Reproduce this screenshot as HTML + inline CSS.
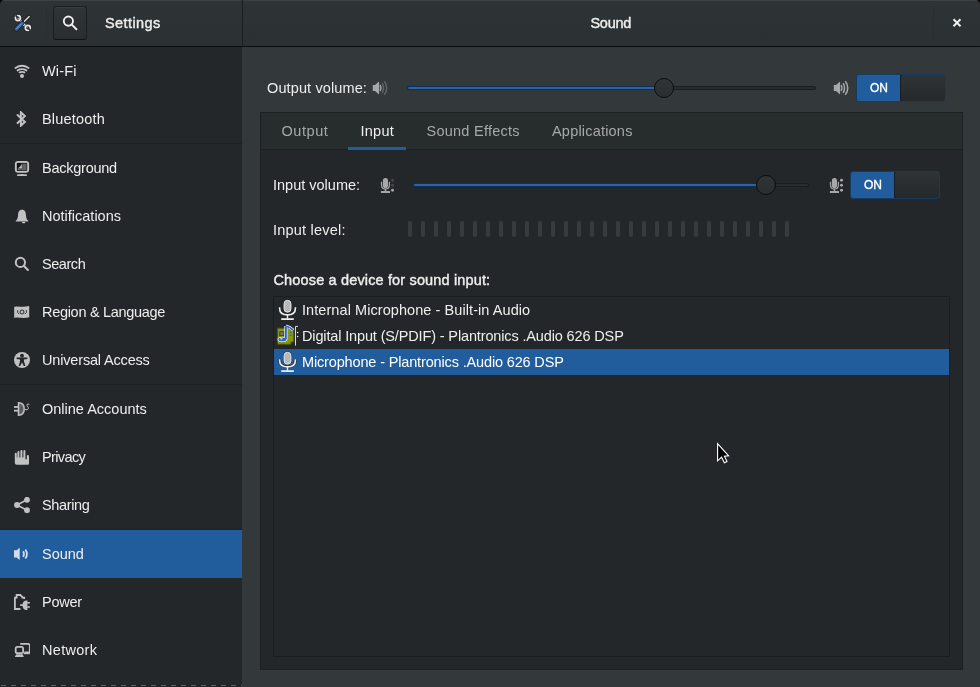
<!DOCTYPE html>
<html><head><meta charset="utf-8">
<style>
*{margin:0;padding:0;box-sizing:border-box}
html,body{width:980px;height:687px;overflow:hidden;background:#000}
body{-webkit-font-smoothing:antialiased;font-family:"Liberation Sans",sans-serif;font-size:14.5px;color:#eeeeec;position:relative}
.a{position:absolute}
.t{position:absolute;line-height:20px;white-space:nowrap}
.b{font-weight:normal;font-size:14.5px;-webkit-text-stroke:0.4px currentColor}
#win{will-change:transform;position:absolute;left:0;top:0;width:980px;height:687px;border-radius:5px 5px 0 0;overflow:hidden;background:#33393b}
#hdr{position:absolute;left:0;top:0;width:980px;height:47px;background:linear-gradient(#2e3335,#2b3032);border-bottom:1px solid #0c0d0e;box-shadow:inset 0 1px #3d4244}
#side{position:absolute;left:0;top:47px;width:242px;height:640px;background:#232729}
.row{position:absolute;left:0;width:242px;height:48px}
.sep{position:absolute;left:0;width:242px;height:1px;background:#1e2123}
.ic{position:absolute;left:14px;width:16px;height:16px}
.lab{position:absolute;left:42px;top:14px;line-height:20px;white-space:nowrap}
</style></head><body>
<div id="win">
 <div id="hdr">
  <div class="a" style="left:242px;top:0;width:1px;height:46px;background:#1b1e1f"></div>
  <div class="a" style="left:46px;top:6px;width:1px;height:34px;background:#2a2e30"></div>
  <div class="a" style="left:933px;top:6px;width:1px;height:34px;background:#2a2e30"></div>
  <!-- search button -->
  <div class="a" style="left:53px;top:6px;width:34px;height:34px;border:1px solid #1b1e1f;border-bottom-color:#111314;border-radius:3px;background:linear-gradient(#2f3436,#2a2e30);box-shadow:inset 0 1px rgba(255,255,255,0.05)"></div>
  <svg class="a" style="left:61px;top:14px" width="18" height="18" viewBox="0 0 18 18"><circle cx="7.4" cy="7.1" r="4.6" fill="none" stroke="#eeeeec" stroke-width="1.9"/><path d="M10.6 10.4 L15.4 15.2" stroke="#eeeeec" stroke-width="2" stroke-linecap="round"/></svg>
  <!-- app icon -->
  <svg class="a" style="left:10px;top:10px" width="26" height="26" viewBox="0 0 26 26">
   <path d="M19.2 6.6 L13 12.8" stroke="#16191a" stroke-width="2.8" stroke-linecap="round"/>
   <path d="M19.2 6.6 L13 12.8" stroke="#e4e4e4" stroke-width="1.4" stroke-linecap="round"/>
   <path d="M7.6 8.2 L17.4 18" stroke="#16191a" stroke-width="3.8"/>
   <path d="M7.6 8.2 L17.4 18" stroke="#e2e2e2" stroke-width="2.5"/>
   <circle cx="7.9" cy="8.1" r="2.5" fill="none" stroke="#16191a" stroke-width="2.8"/>
   <circle cx="7.9" cy="8.1" r="2.5" fill="none" stroke="#e6e6e6" stroke-width="1.8"/>
   <path d="M5.6 5.4 L8.4 8.2" stroke="#2c3133" stroke-width="1.7"/>
   <circle cx="17.8" cy="17.8" r="2.5" fill="none" stroke="#16191a" stroke-width="2.8"/>
   <circle cx="17.8" cy="17.8" r="2.5" fill="none" stroke="#e6e6e6" stroke-width="1.8"/>
   <path d="M17.4 17.6 L20.4 20.4" stroke="#2c3133" stroke-width="1.7"/>
   <path d="M6.4 19 L12.2 13.2" stroke="#16191a" stroke-width="4.6" stroke-linecap="round"/>
   <path d="M6.4 19 L12.2 13.2" stroke="#3767a8" stroke-width="3.4" stroke-linecap="round"/>
   <path d="M6.4 18.8 L11.4 13.8" stroke="#8aaedb" stroke-width="0.7"/>
  </svg>
  <div class="t b" style="left:105px;top:13px;letter-spacing:0.4px">Settings</div>
  <div class="t b" style="left:590.5px;top:13px;letter-spacing:-0.3px">Sound</div>
  <svg class="a" style="left:951px;top:17px" width="12" height="12" viewBox="0 0 12 12"><path d="M2.5 2.3 L9.5 9.3 M9.5 2.3 L2.5 9.3" stroke="#eeeeec" stroke-width="2"/></svg>
 </div>

 <div id="side"></div>
 <div class="row" style="top:47px;"><svg class="ic" style="top:16px" viewBox="0 0 16 16"><circle cx="8" cy="13.1" r="2" fill="#c0c1c1"/>
<path d="M1.5 5 Q8 0.5 14.5 5" fill="none" stroke="#c0c1c1" stroke-width="1.9" stroke-linecap="round"/>
<path d="M3.6 7.4 Q8 4.9 12.4 7.4" fill="none" stroke="#c0c1c1" stroke-width="1.9" stroke-linecap="round"/>
<path d="M5.6 9.4 Q8 8.4 10.4 9.4" fill="none" stroke="#c0c1c1" stroke-width="1.8" stroke-linecap="round"/></svg><div class="lab" style="letter-spacing:0.15px">Wi-Fi</div></div><div class="row" style="top:95px;"><svg class="ic" style="top:16px" viewBox="0 0 16 16"><path d="M3.6 4 L10.9 10.9 L6.9 14.6 V1.4 L10.9 5.1 L3.6 12" fill="none" stroke="#c0c1c1" stroke-width="2" stroke-linejoin="miter" stroke-linecap="round"/></svg><div class="lab" style="letter-spacing:0.18px">Bluetooth</div></div><div class="row" style="top:144px;"><svg class="ic" style="top:16px" viewBox="0 0 16 16"><rect x="1.9" y="1.9" width="12.2" height="9.9" rx="2.2" fill="none" stroke="#c0c1c1" stroke-width="2"/>
<rect x="2.9" y="2.9" width="10.2" height="7.9" fill="#141718"/>
<rect x="8.2" y="3.6" width="4.3" height="6.6" fill="#5f6364"/><rect x="3.6" y="8.9" width="8.9" height="1.3" fill="#5f6364"/>
<path d="M7.9 3.6 V8.6 H3.6 C5.4 7.6 7.2 5.8 7.9 3.6Z" fill="#c0c1c1"/>
<path d="M3 14.4 Q8 13.4 13 14.4 V15.2 Q13 16.1 12 16.1 H4 Q3 16.1 3 15.2Z" fill="#c0c1c1"/></svg><div class="lab" style="letter-spacing:-0.25px">Background</div></div><div class="row" style="top:192px;"><svg class="ic" style="top:16px" viewBox="0 0 16 16"><path d="M8 1.8 C11.2 1.8 11.8 4.2 12 7.6 C12.2 10.6 13 12 14.3 13.1 V13.4 H1.7 V13.1 C3 12 3.8 10.6 4 7.6 C4.2 4.2 4.8 1.8 8 1.8Z" fill="#c0c1c1"/><ellipse cx="9.6" cy="14.5" rx="1.7" ry="0.85" fill="#c0c1c1"/></svg><div class="lab" style="letter-spacing:0px">Notifications</div></div><div class="row" style="top:240px;"><svg class="ic" style="top:16px" viewBox="0 0 16 16"><circle cx="6.4" cy="6.4" r="4.6" fill="none" stroke="#c0c1c1" stroke-width="2"/><path d="M9.8 9.8 L13.9 13.9" stroke="#c0c1c1" stroke-width="2.1" stroke-linecap="round"/></svg><div class="lab" style="letter-spacing:-0.45px">Search</div></div><div class="row" style="top:288px;"><svg class="ic" style="top:16px" viewBox="0 0 16 16"><path d="M0.2 3 C4 1.5 8 3.8 15.2 2 V13.2 C9 15 4 12.6 0.2 14 Z" fill="#c0c1c1"/>
<circle cx="8" cy="8" r="2" fill="none" stroke="#232729" stroke-width="1"/><path d="M3.6 6.2 V8.4 L5.2 10 M12.4 6.2 V8.4 L10.8 10" fill="none" stroke="#232729" stroke-width="0.9"/></svg><div class="lab" style="letter-spacing:-0.3px">Region &amp; Language</div></div><div class="row" style="top:336px;"><svg class="ic" style="top:16px" viewBox="0 0 16 16"><circle cx="8" cy="8" r="8" fill="#c0c1c1"/><circle cx="8" cy="3.7" r="1.9" fill="#232729"/>
<path d="M2.6 5.4 H13.4 V7 L10 7.4 V9.4 L11.4 14 H9.8 L8 10.6 L6.2 14 H4.6 L6 9.4 V7.4 L2.6 7Z" fill="#232729"/></svg><div class="lab" style="letter-spacing:-0.17px">Universal Access</div></div><div class="row" style="top:385px;"><svg class="ic" style="top:16px" viewBox="0 0 16 16"><rect x="-0.2" y="5.1" width="4.4" height="1.8" fill="#c0c1c1"/><rect x="-0.2" y="8.8" width="4.4" height="1.8" fill="#c0c1c1"/>
<path d="M4.5 1.7 C8.6 1.7 10.2 4.8 10.2 8 C10.2 11.2 8.6 14.2 4.5 14.2 Z" fill="#5a5e60" stroke="#c0c1c1" stroke-width="1.5"/>
<path d="M15.4 3.6 C14.8 2.8 12.9 2.8 12.9 4.1 C12.9 5.4 14.5 5.8 14.3 7.3 C14.1 8.8 12.4 9.2 11 8.4" fill="none" stroke="#c0c1c1" stroke-width="1"/></svg><div class="lab" style="letter-spacing:0px">Online Accounts</div></div><div class="row" style="top:433px;"><svg class="ic" style="top:16px" viewBox="0 0 16 16"><path d="M0.8 13.8 V4.8 A1 1 0 0 1 2.8 4.8 V8.6 H3.4 V3 A1 1 0 0 1 5.4 3 V8.6 H6.4 V2 A1 1 0 0 1 8.4 2 V8.6 H9.4 V2 A1 1 0 0 1 11.4 2 V10.2 H12.8 V7 A1.1 1.1 0 0 1 15 7 V14.2 C15 15.2 14.4 15.8 13.4 15.8 H2.8 C1.6 15.8 0.8 15 0.8 13.8Z" fill="#c0c1c1"/></svg><div class="lab" style="letter-spacing:-0.62px">Privacy</div></div><div class="row" style="top:481px;"><svg class="ic" style="top:16px" viewBox="0 0 16 16"><path d="M3 8 L13 2.8 M3 8 L13 13.2" stroke="#c0c1c1" stroke-width="1.6"/>
<circle cx="3" cy="8" r="2.9" fill="#c0c1c1"/><circle cx="13" cy="2.8" r="2.9" fill="#c0c1c1"/><circle cx="13" cy="13.2" r="2.9" fill="#c0c1c1"/></svg><div class="lab" style="letter-spacing:-0.36px">Sharing</div></div><div class="row" style="top:530px;background:#215d9c;"><svg class="ic" style="top:16px" viewBox="0 0 16 16"><path d="M0 4.2 H2.6 L5.7 1.8 V14 L2.6 11.6 H0 Z" fill="#d2dceb"/>
<path d="M9.1 5.2 Q10.9 8 9.1 10.9" fill="none" stroke="#d2dceb" stroke-width="1.8"/>
<path d="M11.3 3.4 Q14.6 8 11.3 12.6" fill="none" stroke="#d2dceb" stroke-width="1.8"/></svg><div class="lab" style="letter-spacing:0px">Sound</div></div><div class="row" style="top:578px;"><svg class="ic" style="top:16px" viewBox="0 0 16 16"><path d="M6.4 15 H0.9 V3.6 H2.6 V1 H6.4 L8.4 3 V3.6 H10.2 V5" fill="none" stroke="#c0c1c1" stroke-width="1.8" stroke-linejoin="miter"/>
<path d="M6.2 10.2 H8.6 C8.8 7.6 10.4 6.4 12.2 6.4 H13.4 V16 H12.2 C10.4 16 8.8 14.6 8.6 12 H6.2Z" fill="#c0c1c1"/>
<rect x="13.2" y="8" width="2.6" height="1.6" fill="#c0c1c1"/><rect x="13.2" y="12.2" width="2.6" height="1.6" fill="#c0c1c1"/></svg><div class="lab" style="letter-spacing:-0.25px">Power</div></div><div class="row" style="top:626px;"><svg class="ic" style="top:16px" viewBox="0 0 16 16"><path d="M6.2 1.9 H14 C15 1.9 15.8 2.7 15.8 3.6 V10.5 H10.4" fill="none" stroke="#c0c1c1" stroke-width="1.8"/>
<rect x="9.8" y="10.4" width="6" height="1.8" fill="#c0c1c1"/>
<rect x="1.7" y="4.9" width="7.4" height="6.3" rx="1.5" fill="none" stroke="#c0c1c1" stroke-width="1.8"/>
<path d="M2.2 12.2 H8.6 L9.8 15 H0.8Z" fill="#c0c1c1"/></svg><div class="lab" style="letter-spacing:0.3px">Network</div></div><div class="sep" style="top:143px"></div><div class="sep" style="top:384px"></div><div class="sep" style="top:529px"></div><div class="a" style="left:0;top:685px;width:242px;height:1px;background:repeating-linear-gradient(90deg,#1c1f20 0 1px,#5d6163 1px 6px,#1c1f20 6px 10px)"></div>
 <div class="t" style="left:267px;top:77.5px;letter-spacing:0.12px">Output volume:</div>
<svg class="a" style="left:372px;top:80px" width="16" height="16" viewBox="0 0 16 16"><path d="M0.8 5 H3 L7.1 1.6 V14.4 L3 11 H0.8 Z" fill="#a7a9a9"/>
<path d="M8 5.2 Q9.9 8 8 10.8" fill="none" stroke="#a7a9a9" stroke-width="1.4"/>
<path d="M10.1 3.2 Q13 8 10.1 12.8" fill="none" stroke="#5f6364" stroke-width="1.5"/>
<path d="M12.3 1.3 Q17.2 8 12.3 14.7" fill="none" stroke="#5f6364" stroke-width="1.5"/></svg>
<div class="a" style="left:407px;top:86px;width:409px;height:4px;border-radius:2px;background:#282c2e;border:1px solid #1b1e20"></div><div class="a" style="left:407px;top:86px;width:257px;height:4px;border-radius:2px 0 0 2px;background:#2a64a6;border:1px solid #0f2e52"></div><div class="a" style="left:654px;top:78px;width:20px;height:20px;border-radius:10px;background:linear-gradient(#2f3436,#2a2e30);border:1px solid #0b0d0e"></div>
<svg class="a" style="left:833px;top:80px" width="16" height="16" viewBox="0 0 16 16"><path d="M0.8 5 H3 L7.1 1.6 V14.4 L3 11 H0.8 Z" fill="#a7a9a9"/>
<path d="M8 5.2 Q9.9 8 8 10.8" fill="none" stroke="#a7a9a9" stroke-width="1.4"/>
<path d="M10.1 3.2 Q13 8 10.1 12.8" fill="none" stroke="#a7a9a9" stroke-width="1.5"/>
<path d="M12.3 1.3 Q17.2 8 12.3 14.7" fill="none" stroke="#a7a9a9" stroke-width="1.5"/></svg>
<div class="a" style="left:856px;top:74px;width:90px;height:28px;border-radius:3px;border:1px solid #173a61;background:#215d9c;overflow:hidden">
<div class="a" style="left:43px;top:-1px;width:46px;height:28px;border-radius:3px;background:linear-gradient(#2e3335,#26292b);border:1px solid #1b1e20;border-right:1px solid #173a61"></div>
<div class="a" style="left:0;top:2.6px;width:44px;text-align:center;line-height:20px;font-size:12px;font-weight:normal;-webkit-text-stroke:0.35px #fff;color:#fff;letter-spacing:0.1px">ON</div></div>
<div class="a" style="left:260px;top:112px;width:703px;height:558px;border:1px solid #1d2021;background:#232729"></div>
<div class="a" style="left:261px;top:113px;width:701px;height:37px;background:#272c2c;border-bottom:1px solid #1d2021"></div>
<div class="a" style="left:348px;top:147px;width:58px;height:3px;background:#215d9c"></div>
<div class="t" style="left:281.5px;top:120.5px;color:#a7a9a9;letter-spacing:0.55px">Output</div>
<div class="t" style="left:360.5px;top:120.5px;letter-spacing:0.25px">Input</div>
<div class="t" style="left:426.5px;top:120.5px;color:#a7a9a9;letter-spacing:0.25px">Sound Effects</div>
<div class="t" style="left:552px;top:120.5px;color:#a7a9a9;letter-spacing:0.2px">Applications</div>
<div class="t" style="left:273px;top:175px">Input volume:</div>
<svg class="a" style="left:380px;top:177px" width="16" height="16" viewBox="0 0 16 16"><rect x="2.9" y="0.9" width="5.1" height="10.2" rx="2.55" fill="#a7a9a9"/>
<path d="M1.5 4.8 V7.4 C1.5 10.6 3.4 12 5.45 12 C7.5 12 9.4 10.6 9.4 7.4 V4.8" fill="none" stroke="#a7a9a9" stroke-width="1.2"/>
<rect x="4.7" y="11.8" width="1.5" height="2.4" fill="#a7a9a9"/><rect x="0.9" y="14" width="9.1" height="2.1" fill="#a7a9a9"/>
<circle cx="12.5" cy="3.3" r="1.45" fill="#45494b"/><circle cx="12.5" cy="8.2" r="1.45" fill="#45494b"/><circle cx="12.5" cy="13.3" r="1.45" fill="#a7a9a9"/></svg>
<div class="a" style="left:413px;top:183px;width:396px;height:4px;border-radius:2px;background:#282c2e;border:1px solid #1b1e20"></div><div class="a" style="left:413px;top:183px;width:353px;height:4px;border-radius:2px 0 0 2px;background:#2a64a6;border:1px solid #0f2e52"></div><div class="a" style="left:756px;top:175px;width:20px;height:20px;border-radius:10px;background:linear-gradient(#2f3436,#2a2e30);border:1px solid #0b0d0e"></div>
<svg class="a" style="left:829px;top:177px" width="16" height="16" viewBox="0 0 16 16"><rect x="2.9" y="0.9" width="5.1" height="10.2" rx="2.55" fill="#a7a9a9"/>
<path d="M1.5 4.8 V7.4 C1.5 10.6 3.4 12 5.45 12 C7.5 12 9.4 10.6 9.4 7.4 V4.8" fill="none" stroke="#a7a9a9" stroke-width="1.2"/>
<rect x="4.7" y="11.8" width="1.5" height="2.4" fill="#a7a9a9"/><rect x="0.9" y="14" width="9.1" height="2.1" fill="#a7a9a9"/>
<circle cx="12.5" cy="3.3" r="1.45" fill="#a7a9a9"/><circle cx="12.5" cy="8.2" r="1.45" fill="#a7a9a9"/><circle cx="12.5" cy="13.3" r="1.45" fill="#a7a9a9"/></svg>
<div class="a" style="left:850px;top:171px;width:90px;height:28px;border-radius:3px;border:1px solid #173a61;background:#215d9c;overflow:hidden">
<div class="a" style="left:43px;top:-1px;width:46px;height:28px;border-radius:3px;background:linear-gradient(#2e3335,#26292b);border:1px solid #1b1e20;border-right:1px solid #173a61"></div>
<div class="a" style="left:0;top:2.6px;width:44px;text-align:center;line-height:20px;font-size:12px;font-weight:normal;-webkit-text-stroke:0.35px #fff;color:#fff;letter-spacing:0.1px">ON</div></div>
<div class="t" style="left:273px;top:220px;letter-spacing:0.22px">Input level:</div>
<div class="a" style="left:408px;top:221px;width:4px;height:16px;border-radius:2px;background:#363b3d"></div><div class="a" style="left:421px;top:221px;width:4px;height:16px;border-radius:2px;background:#363b3d"></div><div class="a" style="left:434px;top:221px;width:4px;height:16px;border-radius:2px;background:#363b3d"></div><div class="a" style="left:447px;top:221px;width:4px;height:16px;border-radius:2px;background:#363b3d"></div><div class="a" style="left:460px;top:221px;width:4px;height:16px;border-radius:2px;background:#363b3d"></div><div class="a" style="left:473px;top:221px;width:4px;height:16px;border-radius:2px;background:#363b3d"></div><div class="a" style="left:486px;top:221px;width:4px;height:16px;border-radius:2px;background:#363b3d"></div><div class="a" style="left:499px;top:221px;width:4px;height:16px;border-radius:2px;background:#363b3d"></div><div class="a" style="left:512px;top:221px;width:4px;height:16px;border-radius:2px;background:#363b3d"></div><div class="a" style="left:525px;top:221px;width:4px;height:16px;border-radius:2px;background:#363b3d"></div><div class="a" style="left:538px;top:221px;width:4px;height:16px;border-radius:2px;background:#363b3d"></div><div class="a" style="left:551px;top:221px;width:4px;height:16px;border-radius:2px;background:#363b3d"></div><div class="a" style="left:564px;top:221px;width:4px;height:16px;border-radius:2px;background:#363b3d"></div><div class="a" style="left:577px;top:221px;width:4px;height:16px;border-radius:2px;background:#363b3d"></div><div class="a" style="left:590px;top:221px;width:4px;height:16px;border-radius:2px;background:#363b3d"></div><div class="a" style="left:603px;top:221px;width:4px;height:16px;border-radius:2px;background:#363b3d"></div><div class="a" style="left:616px;top:221px;width:4px;height:16px;border-radius:2px;background:#363b3d"></div><div class="a" style="left:629px;top:221px;width:4px;height:16px;border-radius:2px;background:#363b3d"></div><div class="a" style="left:642px;top:221px;width:4px;height:16px;border-radius:2px;background:#363b3d"></div><div class="a" style="left:655px;top:221px;width:4px;height:16px;border-radius:2px;background:#363b3d"></div><div class="a" style="left:668px;top:221px;width:4px;height:16px;border-radius:2px;background:#363b3d"></div><div class="a" style="left:681px;top:221px;width:4px;height:16px;border-radius:2px;background:#363b3d"></div><div class="a" style="left:694px;top:221px;width:4px;height:16px;border-radius:2px;background:#363b3d"></div><div class="a" style="left:707px;top:221px;width:4px;height:16px;border-radius:2px;background:#363b3d"></div><div class="a" style="left:720px;top:221px;width:4px;height:16px;border-radius:2px;background:#363b3d"></div><div class="a" style="left:733px;top:221px;width:4px;height:16px;border-radius:2px;background:#363b3d"></div><div class="a" style="left:746px;top:221px;width:4px;height:16px;border-radius:2px;background:#363b3d"></div><div class="a" style="left:759px;top:221px;width:4px;height:16px;border-radius:2px;background:#363b3d"></div><div class="a" style="left:772px;top:221px;width:4px;height:16px;border-radius:2px;background:#363b3d"></div><div class="a" style="left:785px;top:221px;width:4px;height:16px;border-radius:2px;background:#363b3d"></div>
<div class="t b" style="left:273.5px;top:270px;letter-spacing:0.15px">Choose a device for sound input:</div>
<div class="a" style="left:273px;top:296px;width:677px;height:361px;border:1px solid #1b1e1f;background:#232729"></div>
<div class="a" style="left:274px;top:349px;width:675px;height:26px;background:#215d9c"></div>
<svg class="a" style="left:275px;top:297px" width="25" height="25" viewBox="0 0 25 25">
<defs><pattern id="chk297" width="1.6" height="1.6" patternUnits="userSpaceOnUse"><rect width="1.6" height="1.6" fill="#d4d4d4"/><rect width="0.8" height="0.8" fill="#9a9a9a"/><rect x="0.8" y="0.8" width="0.8" height="0.8" fill="#9a9a9a"/></pattern></defs>
<path d="M4.6 10.2 V11.2 C4.6 15.6 8 17.8 12.5 17.8 C17 17.8 20.4 15.6 20.4 11.2 V10.2" fill="none" stroke="#141617" stroke-width="2.8"/>
<path d="M4.6 10.2 V11.2 C4.6 15.6 8 17.8 12.5 17.8 C17 17.8 20.4 15.6 20.4 11.2 V10.2" fill="none" stroke="#ececec" stroke-width="1.7"/>
<rect x="8.3" y="2.6" width="8.4" height="13.4" rx="4.2" fill="#141617"/>
<rect x="9" y="3.3" width="7" height="12" rx="3.5" fill="url(#chk297)" stroke="#f2f2f2" stroke-width="0.9"/>
<rect x="11.8" y="17.4" width="1.4" height="4.2" fill="#ececec"/>
<rect x="6.2" y="21.2" width="12.6" height="1.8" fill="#ececec"/>
</svg>
<svg class="a" style="left:275px;top:349px" width="25" height="25" viewBox="0 0 25 25">
<defs><pattern id="chk349" width="1.6" height="1.6" patternUnits="userSpaceOnUse"><rect width="1.6" height="1.6" fill="#d4d4d4"/><rect width="0.8" height="0.8" fill="#9a9a9a"/><rect x="0.8" y="0.8" width="0.8" height="0.8" fill="#9a9a9a"/></pattern></defs>
<path d="M4.6 10.2 V11.2 C4.6 15.6 8 17.8 12.5 17.8 C17 17.8 20.4 15.6 20.4 11.2 V10.2" fill="none" stroke="#141617" stroke-width="2.8"/>
<path d="M4.6 10.2 V11.2 C4.6 15.6 8 17.8 12.5 17.8 C17 17.8 20.4 15.6 20.4 11.2 V10.2" fill="none" stroke="#ececec" stroke-width="1.7"/>
<rect x="8.3" y="2.6" width="8.4" height="13.4" rx="4.2" fill="#141617"/>
<rect x="9" y="3.3" width="7" height="12" rx="3.5" fill="url(#chk349)" stroke="#f2f2f2" stroke-width="0.9"/>
<rect x="11.8" y="17.4" width="1.4" height="4.2" fill="#ececec"/>
<rect x="6.2" y="21.2" width="12.6" height="1.8" fill="#ececec"/>
</svg>
<svg class="a" style="left:275px;top:323px" width="25" height="25" viewBox="0 0 25 25">
<path d="M2.4 5.2 H18.8 V19 H16 V21.3 H2.4Z" fill="#879712" stroke="#4a5400" stroke-width="1"/>
<rect x="4.8" y="8.8" width="4.2" height="4" fill="#707373" stroke="#262828" stroke-width="0.7"/>
<rect x="15.1" y="9" width="1.6" height="0.9" fill="#2f5fb0"/><rect x="15.1" y="11.6" width="1.6" height="1.3" fill="#2f5fb0"/>
<path d="M10.9 3 V16" stroke="#e8eef6" stroke-width="3.2"/>
<path d="M10.9 3 C13.6 3.6 16 5 18.2 7" fill="none" stroke="#e8eef6" stroke-width="3"/>
<ellipse cx="7.4" cy="16.4" rx="4.9" ry="2.7" fill="#e8eef6"/>
<path d="M10.9 3.2 V16" stroke="#2c62b8" stroke-width="1.8"/>
<path d="M10.9 3.2 C13.6 3.8 16 5.2 18 7" fill="none" stroke="#3a6fc4" stroke-width="1.8"/>
<ellipse cx="7.4" cy="16.4" rx="4" ry="1.9" fill="#3166b8"/>
<ellipse cx="6.4" cy="15.8" rx="1.5" ry="0.6" fill="#dfe9f7"/>
<path d="M20.5 22.6 V3.4 H23" fill="none" stroke="#eeeeee" stroke-width="0.9"/>
<circle cx="22.6" cy="9.5" r="0.75" fill="#eeeeee"/><circle cx="22.6" cy="13.5" r="0.75" fill="#eeeeee"/>
</svg>
<div class="t" style="left:302px;top:300px;letter-spacing:0.07px">Internal Microphone - Built-in Audio</div>
<div class="t" style="left:302px;top:326px;letter-spacing:-0.14px">Digital Input (S/PDIF) - Plantronics .Audio 626 DSP</div>
<div class="t" style="left:302px;top:352px;letter-spacing:-0.15px;color:#fff">Microphone - Plantronics .Audio 626 DSP</div>
<svg class="a" style="left:708px;top:436px" width="30" height="30" viewBox="708 436 30 30"><path d="M717.6 443.6 V460.8 L721.6 457.2 L724.4 462.8 L727 461.6 L724.4 456.2 L728.6 455.8 Z" fill="#000" stroke="#fff" stroke-width="1.1" stroke-linejoin="miter"/></svg>
</div>
</body></html>
